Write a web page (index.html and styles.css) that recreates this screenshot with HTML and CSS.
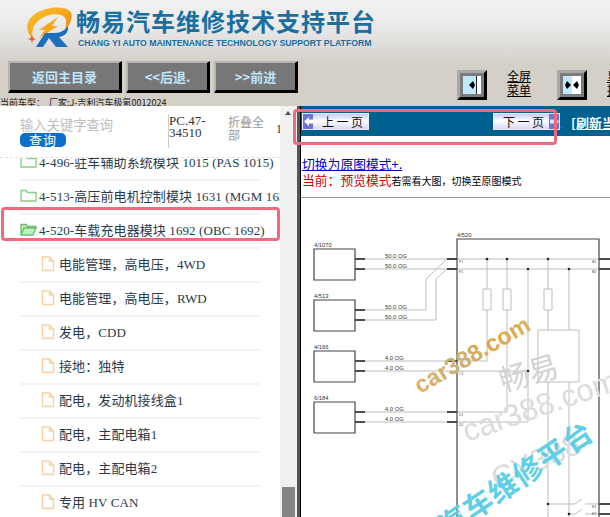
FILE: index.html
```html
<!DOCTYPE html>
<html lang="zh">
<head>
    <meta charset="UTF-8">
    <meta name="viewport" content="width=device-width, initial-scale=1.0">
    <title>畅易汽车维修技术支持平台</title>
    <link rel="stylesheet" href="styles.css">
</head>
<body>
    <header class="banner">
        <svg class="logo" width="50" height="48" viewBox="0 0 50 48">
            <defs>
                <linearGradient id="swirl" x1="0" y1="0" x2="1" y2="1">
                    <stop offset="0" stop-color="#f4c02a"/>
                    <stop offset="0.5" stop-color="#f7a81c"/>
                    <stop offset="1" stop-color="#e9780f"/>
                </linearGradient>
            </defs>
            <path d="M8 33C0 26 0 15 10 8C20 1 38-1 45 5C49 9 46 18 40 24C42 16 42 11 36 9C26 6 12 12 8 22C7 26 7 30 8 33z" fill="url(#swirl)"/>
            <path d="M33 11L27 20L33 20L14 32L20 24L14 24z" fill="#f3a51d"/>
            <path d="M11 41L20 27H30C36 27 40 24 43 20C44 26 40 30 34 31L43 41H31L24 32L18 41z" fill="#1c70b8"/>
            <path d="M3 33l3-1 1-3 1 3 3 1-3 1-1 3-1-3z" fill="#e8531c"/>
        </svg>
        <div class="brand">
            <h1>畅易汽车维修技术支持平台</h1>
            <p>CHANG YI AUTO MAINTENANCE TECHNOLOGY SUPPORT PLATFORM</p>
        </div>
    </header>

    <nav class="toolbar">
        <a class="tool-btn tool-btn-main">返回主目录</a>
        <a class="tool-btn">&lt;&lt;后退.</a>
        <a class="tool-btn">&gt;&gt;前进</a>
        <span class="frame-btn frame-btn-first">
            <svg width="18" height="18" viewBox="0 0 18 18">
                <rect width="18" height="18" fill="#bfe8fb"/>
                <rect x="13" width="1" height="18" fill="#222"/>
                <rect x="14" width="4" height="18" fill="#fff"/>
                <path d="M6 9l4-4 2 4-2 4z" fill="#000"/>
            </svg>
        </span>
        <a class="frame-label frame-label-first">全屏<br>菜单</a>
        <span class="frame-btn frame-btn-second">
            <svg width="18" height="18" viewBox="0 0 18 18">
                <rect width="9" height="18" fill="#bfe8fb"/>
                <rect x="9" width="9" height="18" fill="#fff"/>
                <path d="M2 9l2-4 4 4-4 4z" fill="#000"/>
                <path d="M16 9l-2-4-4 4 4 4z" fill="#000"/>
            </svg>
        </span>
        <a class="frame-label frame-label-second">显示<br>提示</a>
    </nav>

    <div class="car-line">当前车型&#xFF1A; &nbsp;厂家:J-吉利汽车极氪0012024</div>

    <main class="workspace">
        <aside class="side">
            <div class="side-body">
                <div class="search">
                    <div class="search-col">
                        <span class="search-hint">输入关键字查询</span>
                        <span class="search-btn">查询</span>
                    </div>
                    <div class="model">PC.47-<br>34510</div>
                    <div class="collapse">折叠全<br>部</div>
                    <div class="count">1</div>
                </div>
                <div class="tree-view">
                    <ul class="tree">
                        <li class="node">
                            <svg class="folder" width="17" height="13" viewBox="0 0 17 13"><path d="M1 12V1.500h5l1.500 2H16V12z" fill="none" stroke="#84d084" stroke-width="1.300"/></svg>
                            4-496-驻车辅助系统模块 1015 (PAS 1015)
                        </li>
                        <li class="node">
                            <svg class="folder" width="17" height="13" viewBox="0 0 17 13"><path d="M1 12V1.500h5l1.500 2H16V12z" fill="none" stroke="#84d084" stroke-width="1.300"/></svg>
                            4-513-高压前电机控制模块 1631 (MGM 1631)
                        </li>
                        <li class="node">
                            <svg class="folder" width="17" height="13" viewBox="0 0 17 13"><path d="M1 12V1.500h5l1.500 2H16V5H4L1 12zM1 12h12l3-7H4z" fill="#c5ecc0" stroke="#6cc06c" stroke-width="1.300"/></svg>
                            4-520-车载充电器模块 1692 (OBC 1692)
                        </li>
                        <li class="node node-file">
                            <svg class="file" width="14" height="16" viewBox="0 0 14 16"><path d="M1.500 1h7l4 4v9.500h-11zM8.500 1v4h4" fill="none" stroke="#f6d2a6" stroke-width="1.500"/></svg>
                            电能管理&#xFF0C;高电压&#xFF0C;4WD
                        </li>
                        <li class="node node-file">
                            <svg class="file" width="14" height="16" viewBox="0 0 14 16"><path d="M1.500 1h7l4 4v9.500h-11zM8.500 1v4h4" fill="none" stroke="#f6d2a6" stroke-width="1.500"/></svg>
                            电能管理&#xFF0C;高电压&#xFF0C;RWD
                        </li>
                        <li class="node node-file">
                            <svg class="file" width="14" height="16" viewBox="0 0 14 16"><path d="M1.500 1h7l4 4v9.500h-11zM8.500 1v4h4" fill="none" stroke="#f6d2a6" stroke-width="1.500"/></svg>
                            发电&#xFF0C;CDD
                        </li>
                        <li class="node node-file">
                            <svg class="file" width="14" height="16" viewBox="0 0 14 16"><path d="M1.500 1h7l4 4v9.500h-11zM8.500 1v4h4" fill="none" stroke="#f6d2a6" stroke-width="1.500"/></svg>
                            接地&#xFF1A;独特
                        </li>
                        <li class="node node-file">
                            <svg class="file" width="14" height="16" viewBox="0 0 14 16"><path d="M1.500 1h7l4 4v9.500h-11zM8.500 1v4h4" fill="none" stroke="#f6d2a6" stroke-width="1.500"/></svg>
                            配电&#xFF0C;发动机接线盒1
                        </li>
                        <li class="node node-file">
                            <svg class="file" width="14" height="16" viewBox="0 0 14 16"><path d="M1.500 1h7l4 4v9.500h-11zM8.500 1v4h4" fill="none" stroke="#f6d2a6" stroke-width="1.500"/></svg>
                            配电&#xFF0C;主配电箱1
                        </li>
                        <li class="node node-file">
                            <svg class="file" width="14" height="16" viewBox="0 0 14 16"><path d="M1.500 1h7l4 4v9.500h-11zM8.500 1v4h4" fill="none" stroke="#f6d2a6" stroke-width="1.500"/></svg>
                            配电&#xFF0C;主配电箱2
                        </li>
                        <li class="node node-file">
                            <svg class="file" width="14" height="16" viewBox="0 0 14 16"><path d="M1.500 1h7l4 4v9.500h-11zM8.500 1v4h4" fill="none" stroke="#f6d2a6" stroke-width="1.500"/></svg>
                            专用 HV CAN
                        </li>
                    </ul>
                </div>
            </div>
            <div class="scrollbar">
                <span class="scroll-arrow"></span>
                <span class="scroll-thumb"></span>
            </div>
        </aside>

        <section class="viewer">
            <div class="pager">
                <span class="page-btn">
                    <span class="page-end">
                        <svg width="9" height="11" viewBox="0 0 9 11"><path d="M0 5.500L5 1v2.500h4v4H5V10z" fill="#fff"/></svg>
                    </span>
                    <span class="page-text">上一页</span>
                </span>
                <span class="page-btn page-btn-next">
                    <span class="page-text">下一页</span>
                    <span class="page-end">
                        <svg width="9" height="11" viewBox="0 0 9 11"><path d="M9 5.500L4 1v2.500H0v4h4V10z" fill="#dfe3ff"/></svg>
                    </span>
                </span>
                <a class="page-tail"></a>
                <a class="refresh">[刷新当前页]</a>
            </div>
            <div class="mode">
                <a class="mode-link">切换为原图模式+.</a>
                <p class="mode-now"><b>当前&#xFF1A;预览模式</b><small>若需看大图&#xFF0C;切换至原图模式</small></p>
            </div>
            <div class="sheet">
                <svg class="diagram" width="309" height="319" viewBox="301 198 309 319">
                    <defs>
                        <linearGradient id="gold" x1="0" y1="0" x2="1" y2="0">
                            <stop offset="0" stop-color="#e0b060"/>
                            <stop offset="0.35" stop-color="#c9b07a"/>
                            <stop offset="0.65" stop-color="#e2a448"/>
                            <stop offset="1" stop-color="#d7b45a"/>
                        </linearGradient>
                    </defs>
                    <g class="wire">
                        <path d="M365 259H457M365 269H457M365 310H426V279L447 259M365 320H436V279L447 269"/>
                        <path d="M365 361H457M365 371H457M365 412H447M365 422H447"/>
                        <path d="M457 259H599M457 269H599"/>
                        <path d="M487 259V361H457M507 259V412H457M528 269V422H457M528 371H457"/>
                        <path d="M548 259V330M569 269V330M548 382V517M569 382V517"/>
                        <path d="M538 330H579V382H538z"/>
                        <path d="M483 289H491V310H483zM503 289H511V310H503zM544 289H552V310H544z" fill="#fff"/>
                        <path d="M548 504H575L582 499M569 514H575L582 509M585 504H599M585 514H599"/>
                    </g>
                    <g class="pin">
                        <path d="M355 259H365M355 269H365M355 310H365M355 320H365M355 361H365M355 371H365M355 412H365M355 422H365"/>
                        <path d="M447 259H457M447 269H457M447 361H457M447 412H457M447 422H457M599 259H610M599 269H610M599 504H610M599 514H610"/>
                    </g>
                    <g class="unit">
                        <path d="M314 249H355V280H314zM314 300H355V331H314zM314 351H355V382H314zM314 402H355V433H314z"/>
                        <path d="M457 517V239H599V517"/>
                    </g>
                    <g class="dots">
                        <circle cx="487" cy="259" r="1.300"/><circle cx="507" cy="259" r="1.300"/><circle cx="548" cy="259" r="1.300"/>
                        <circle cx="528" cy="269" r="1.300"/><circle cx="569" cy="269" r="1.300"/><circle cx="528" cy="371" r="1.300"/>
                        <circle cx="548" cy="504" r="1.300"/><circle cx="569" cy="514" r="1.300"/>
                    </g>
                    <g class="diagram-label">
                        <text x="314" y="247">4/1070</text><text x="314" y="298">4/513</text><text x="314" y="349">4/166</text><text x="314" y="400">6/184</text><text x="457" y="237">4/520</text>
                        <text x="385" y="258">50.0 OG</text><text x="385" y="268">50.0 OG</text><text x="385" y="309">50.0 OG</text><text x="385" y="319">50.0 OG</text>
                        <text x="385" y="360">4.0 OG</text><text x="385" y="370">4.0 OG</text><text x="385" y="411">4.0 OG</text><text x="385" y="421">4.0 OG</text>
                    </g>
                    <g class="diagram-pin">
                        <text x="459" y="263">F1</text><text x="459" y="273">F2</text><text x="459" y="375">C2</text><text x="459" y="416">D1</text><text x="459" y="426">D2</text>
                        <text x="592" y="263">B1</text><text x="592" y="273">B2</text><text x="592" y="508">E1</text><text x="592" y="515">E2</text>
                    </g>
                    <text class="mark mark-grey" transform="translate(503 392) rotate(-16)">畅易</text>
                    <text class="mark mark-thin" transform="translate(467 442) rotate(-19)">car388.com</text>
                    <text class="mark mark-thin" transform="translate(497 490) rotate(-24)">CY388</text>
                    <text class="mark mark-gold" transform="translate(420 394) rotate(-30)">car388.com</text>
                    <text class="mark mark-cyan" transform="translate(447 538) rotate(-34)">汽车维修平台</text>
                </svg>
            </div>
        </section>

        <span class="flag flag-tree"></span>
        <span class="flag flag-pager"></span>
    </main>
</body>
</html>
```

FILE: styles.css
```css
html, body {
    margin: 0;
    height: 100%;
    overflow: hidden;
}

body {
    width: 610px;
    height: 517px;
    background: #d4d0c8;
    font-family: "Liberation Serif", "Noto Sans CJK SC", serif;
    display: flex;
    flex-direction: column;
}

/* top banner */
.banner {
    height: 60px;
    box-sizing: border-box;
    padding: 6px 0 0 25px;
    display: flex;
    gap: 1px;
    flex: none;
    background: linear-gradient(180deg, #f1f1f1 0%, #ececec 35%, #d6d3cd 100%);
}

.logo {
    flex: none;
}

.brand h1 {
    margin: 0;
    font-family: "Noto Sans CJK SC", sans-serif;
    font-size: 24px;
    line-height: 30px;
    font-weight: 700;
    letter-spacing: 1px;
    color: #1a6f9f;
    white-space: nowrap;
}

.brand p {
    margin: 2px 0 0 2px;
    font-family: "Liberation Sans", sans-serif;
    font-size: 8.700px;
    line-height: 11px;
    font-weight: 700;
    color: #1a6f9f;
    white-space: nowrap;
}

/* tool bar */
.toolbar {
    height: 38px;
    display: flex;
    align-items: flex-start;
    padding: 1px 0 0 8px;
    box-sizing: border-box;
    flex: none;
}

.tool-btn {
    width: 84px;
    height: 32px;
    box-sizing: border-box;
    margin-right: 4px;
    flex: none;
    background: #777;
    border-style: solid;
    border-width: 2px 3px 3px 2px;
    border-color: #b5b5b5 #000 #000 #b5b5b5;
    color: #bfe4fb;
    font-family: "Noto Sans CJK SC", sans-serif;
    font-size: 13px;
    font-weight: 700;
    display: flex;
    align-items: center;
    justify-content: center;
}

.tool-btn-main {
    width: 114px;
}

.frame-btn {
    width: 30px;
    height: 30px;
    box-sizing: border-box;
    margin-top: 9px;
    padding: 3px;
    flex: none;
    background: #7c7c7c;
    border-style: solid;
    border-width: 3px;
    border-color: #a8a8a8 #000 #000 #a8a8a8;
}

.frame-btn svg {
    display: block;
}

.frame-btn-first {
    margin-left: 155px;
}

.frame-btn-second {
    margin-left: 26px;
}

.frame-label {
    margin: 8px 0 0 20px;
    flex: none;
    font-family: "Noto Sans CJK SC", sans-serif;
    font-size: 12px;
    line-height: 14px;
    color: #000;
    text-decoration: underline;
    white-space: nowrap;
}

.car-line {
    height: 8px;
    flex: none;
    font-family: "Noto Sans CJK SC", sans-serif;
    font-size: 9px;
    line-height: 9px;
    color: #222;
    white-space: nowrap;
    overflow: visible;
}

/* two panes */
.workspace {
    position: relative;
    flex: 1;
    display: flex;
    min-height: 0;
}

.side {
    width: 300px;
    box-sizing: border-box;
    display: flex;
    border-right: 3px solid #555;
    flex: none;
}

.side-body {
    width: 280px;
    flex: none;
    background: #fff;
    overflow: hidden;
}

.search {
    height: 52px;
    box-sizing: border-box;
    padding: 8px 0 0 20px;
    display: flex;
}

.search-col {
    width: 148px;
    flex: none;
    display: flex;
    flex-direction: column;
    align-items: flex-start;
}

.search-hint {
    padding-top: 2px;
    font-family: "Noto Sans CJK SC", sans-serif;
    font-size: 13.300px;
    line-height: 18px;
    color: #bdbdbd;
}

.search-btn {
    width: 46px;
    height: 14px;
    margin-top: -1px;
    background: #0d6fc9;
    border-radius: 5px;
    color: #fff;
    font-family: "Noto Sans CJK SC", sans-serif;
    font-size: 13px;
    line-height: 14px;
    letter-spacing: 1px;
    text-align: center;
}

.model {
    width: 60px;
    height: 34px;
    flex: none;
    box-sizing: border-box;
    padding: 1px 0 0;
    border-left: 1px solid #ccc;
    font-size: 13px;
    line-height: 12px;
    color: #333;
}

.collapse {
    width: 48px;
    flex: none;
    padding-top: 1px;
    font-family: "Noto Sans CJK SC", sans-serif;
    font-size: 12px;
    line-height: 13px;
    color: #999;
}

.count {
    font-size: 12px;
    line-height: 30px;
    color: #333;
}

.tree-view {
    height: 359px;
    overflow: hidden;
    border-top: 1px dashed #e2e2e2;
    margin-top: -1px;
}

.tree {
    list-style: none;
    margin: -11px 0 0;
    padding: 0;
}

.node {
    width: 240px;
    height: 34px;
    box-sizing: border-box;
    margin-left: 20px;
    padding-bottom: 3px;
    display: flex;
    align-items: center;
    gap: 2px;
    border-bottom: 2px solid #f3f3f5;
    font-size: 13px;
    letter-spacing: 0.1px;
    color: #2a3a4a;
    white-space: nowrap;
}

.node-file {
    padding-left: 21px;
    gap: 4px;
}

.folder, .file {
    flex: none;
}

.scrollbar {
    position: relative;
    width: 17px;
    flex: none;
    background: #f1f1f1;
}

.scroll-arrow {
    position: absolute;
    top: 5px;
    left: 5px;
    border-left: 3px solid transparent;
    border-right: 3px solid transparent;
    border-bottom: 4px solid #505050;
}

.scroll-thumb {
    position: absolute;
    left: 2px;
    bottom: 0;
    width: 13px;
    height: 30px;
    background: #858585;
}

/* right pane */
.viewer {
    flex: 1;
    min-width: 0;
    background: #fff;
    border-left: 1px solid #000;
    overflow: hidden;
}

.pager {
    height: 30px;
    box-sizing: border-box;
    padding: 7px 0 0 1px;
    background: #00608f;
    display: flex;
    align-items: flex-start;
    white-space: nowrap;
}

.page-btn {
    width: 67px;
    height: 17px;
    flex: none;
    box-sizing: border-box;
    border: 1px solid #e8ecff;
    background: linear-gradient(180deg, #c8cbf4 0%, #fff 45%, #d6d8f6 100%);
    display: flex;
    align-items: stretch;
}

.page-btn-next {
    margin-left: 124px;
}

.page-end {
    width: 10px;
    flex: none;
    background: #6a75dc;
    display: flex;
    align-items: center;
    justify-content: center;
}

.page-text {
    flex: 1;
    padding-left: 9px;
    font-family: "Noto Sans CJK SC", sans-serif;
    font-size: 12px;
    line-height: 15px;
    letter-spacing: 2.500px;
    color: #111;
}

.page-tail {
    width: 4px;
    height: 14px;
    flex: none;
    border-bottom: 1px solid #2a5ad0;
}

.refresh {
    margin: 2px 0 0 7px;
    flex: none;
    font-family: "Noto Sans CJK SC", sans-serif;
    font-size: 13px;
    line-height: 15px;
    font-weight: 700;
    color: #fff;
    text-decoration: underline;
}

.mode {
    height: 62px;
    box-sizing: border-box;
    padding: 19px 0 0 1px;
    border-bottom: 1px solid #999;
    font-family: "Noto Sans CJK SC", sans-serif;
}

.mode-link {
    display: block;
    font-size: 12.800px;
    line-height: 17px;
    color: #0000c8;
    text-decoration: underline;
}

.mode-now {
    margin: -1px 0 0;
    font-size: 12.800px;
    line-height: 17px;
    color: #000;
    white-space: nowrap;
}

.mode-now b {
    font-weight: 400;
    color: #d00000;
}

.mode-now small {
    font-size: 10px;
}

.sheet {
    height: 319px;
    overflow: hidden;
}

.diagram {
    display: block;
}

.wire path {
    fill: none;
    stroke: #bdbdbd;
    stroke-width: 1;
}

.wire path[fill] {
    fill: #fff;
}

.pin path {
    stroke: #111;
    stroke-width: 1.500;
    fill: none;
}

.unit path {
    stroke: #444;
    stroke-width: 1.200;
    fill: none;
}

.dots circle {
    fill: #222;
}

.diagram-label text {
    font-family: "Liberation Sans", sans-serif;
    font-size: 5.800px;
    fill: #333;
}

.diagram-pin text {
    font-family: "Liberation Sans", sans-serif;
    font-size: 3.500px;
    fill: #555;
}

.mark {
    font-family: "Liberation Sans", "Noto Sans CJK SC", sans-serif;
}

.mark-grey {
    font-size: 30px;
    fill: #d2d2d2;
}

.mark-thin {
    font-size: 31px;
    fill: #dcdcdc;
}

.mark-gold {
    font-size: 23.500px;
    font-weight: 700;
    fill: url(#gold);
}

.mark-cyan {
    font-size: 29px;
    font-weight: 700;
    letter-spacing: 1px;
    fill: #5fcfe6;
}

/* red marks over the screenshot */
.flag {
    position: absolute;
    box-sizing: border-box;
    border: 3px solid #ef6a80;
    border-radius: 4px;
}

.flag-tree {
    left: 1px;
    top: 101px;
    width: 279px;
    height: 34px;
}

.flag-pager {
    left: 293px;
    top: 3px;
    width: 264px;
    height: 36px;
}
```
